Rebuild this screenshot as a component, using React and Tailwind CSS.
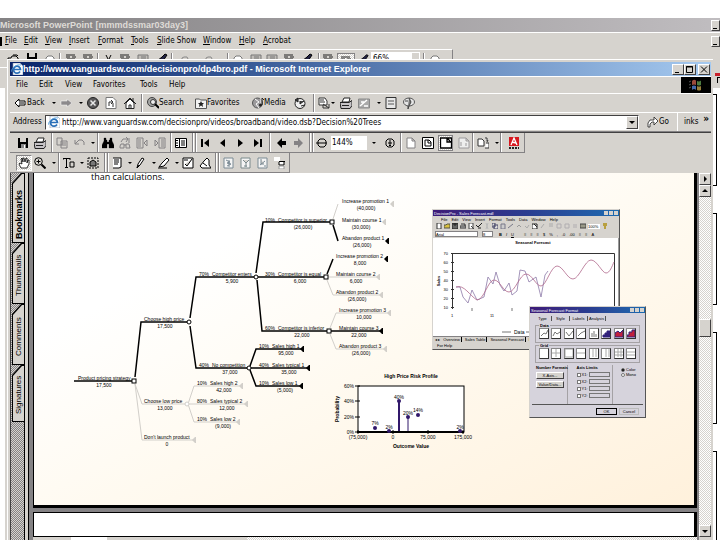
import React from "react";
import clsx from "clsx";

const DITHER =
  "bg-[conic-gradient(#848284_25%,#d6d3ce_0_50%,#848284_0_75%,#d6d3ce_0)] bg-[length:2px_2px]";
const TRACK =
  "bg-[conic-gradient(#ffffff_25%,#d6d3ce_0_50%,#ffffff_0_75%,#d6d3ce_0)] bg-[length:2px_2px]";
const RAISED =
  "bg-[#d6d3ce] border border-t-white border-l-white border-r-[#424142] border-b-[#424142]";

/* every glyph sits on a 12x12 grid */
const GLYPHS = {
  back: <path d="M0 6l4-4v2h6v4H4v2zM4 6h5" fill="#fff" stroke="#000" />,
  forward: <path d="M12 6L7 2v2H1v4h6v2z" fill="#8c8a8c" stroke="#fff" strokeWidth=".5" />,
  stop: (
    <>
      <circle cx="6" cy="6" r="5.5" fill="#5a595a" stroke="#222" />
      <path d="M3.5 3.5l5 5m0-5l-5 5" stroke="#e8e8e8" strokeWidth="1.5" />
    </>
  ),
  refresh: (
    <>
      <path d="M1 .5h7l3 3v8H1z" fill="#fff" stroke="#777" />
      <path d="M4 9V5h4M6 3l2 2-2 2M8 6v4" fill="none" stroke="#333" />
    </>
  ),
  home: (
    <>
      <path d="M2 6v5.5h8V6L6 2z" fill="#fff" stroke="#222" />
      <path d="M0 7l6-6 6 6M9 1v3M5 11V8h2v3" fill="none" stroke="#222" />
    </>
  ),
  search: (
    <>
      <circle cx="5" cy="5" r="4.5" fill="#a5a6a5" stroke="#424142" />
      <circle cx="6" cy="5" r="2.5" fill="#eee" stroke="#333" />
      <path d="M8 7l4 4" stroke="#000" strokeWidth="2" />
    </>
  ),
  favorites: (
    <>
      <path d="M.5 2h4l1 1h6v8.500H.5z" fill="#f2f2f2" stroke="#555" />
      <path d="M6 4l1 2h2L7.500 7.500 8 10 6 8.500 4 10l.5-2.500L3 6h2z" fill="#222" />
    </>
  ),
  media: (
    <>
      <circle cx="5.500" cy="6" r="5" fill="#9c9a9c" stroke="#555" />
      <path d="M3 2l4 3-3 2 3 4M9 1v6" fill="none" stroke="#fff" />
      <circle cx="8.500" cy="8" r="1.500" fill="#222" />
      <path d="M10 8V1l2 2" fill="none" stroke="#222" />
    </>
  ),
  history: (
    <>
      <circle cx="6" cy="6.500" r="5" fill="#efefef" stroke="#222" />
      <path d="M6 4v3l4-3M1 3l3-2v4zM7 9l4-1" fill="#444" stroke="#222" />
    </>
  ),
  mail: (
    <>
      <path d="M1 1h6l2 3v4H1z" fill="#fff" stroke="#333" />
      <path d="M2 3h4M2 5h5M5 7l6 4V7M5 8v3h6" fill="none" stroke="#333" />
    </>
  ),
  printer: (
    <>
      <path d="M4 1h6L9 5H2z" fill="#fff" stroke="#222" />
      <path d="M0 5.500h9l3-2v5l-2 3H1z" fill="#c6c3c6" stroke="#222" />
      <path d="M2 8.500h7" stroke="#222" />
    </>
  ),
  edit: (
    <>
      <path d="M.5 2h11v9H.5z" fill="#aaa" stroke="#888" />
      <path d="M2 9l7-6M3 5h3M6 9h4" stroke="#fff" strokeWidth="1.500" />
    </>
  ),
  discuss: (
    <>
      <path d="M1 .5h10v11H1z" fill="#e8e8e8" stroke="#333" />
      <path d="M3 4h6M3 7h6" stroke="#555" />
    </>
  ),
  messenger: (
    <>
      <ellipse cx="6" cy="5" rx="5.500" ry="4" fill="#e5e5e5" stroke="#555" />
      <path d="M6 1l2 4-2 4-1 3v-3M2 4h3" fill="#777" stroke="#444" />
    </>
  ),
  go: <path d="M1 11V7l2-3h4V1l4 4-4 4V6H5L3 8v3z" fill="#fff" stroke="#222" strokeWidth=".8" />,
  save: (
    <>
      <path d="M1 1h10v10H1z" fill="#000" />
      <path d="M3 1h6v4H3z" fill="#d6d3ce" />
      <path d="M4 7h5v4H4z" fill="#888" />
      <path d="M7 8h1v3H7z" fill="#fff" />
    </>
  ),
  copy: <path d="M1 1h5v7H1zM5 4h6v7H5zM6 6h4M6 8h4" fill="#d6d3ce" stroke="#848284" />,
  undo: <path d="M1 3v4h4M1 7l4-4h3l2 2v3" fill="none" stroke="#848284" />,
  find: (
    <path
      d="M2 1h2v2h1v2h2V3h1V1h2v3l2 4v3H7V7H5v4H0V8l2-4z"
      fill="#000"
      stroke="#000"
      strokeWidth=".3"
    />
  ),
  findNext: (
    <path d="M2 7h3v4H1V9zM7 7h3l1 4H7zM5 8h2M2 5l2-3h5M7 0l2 2-2 3M10 1v5" fill="none" stroke="#848284" />
  ),
  hitPrev: <path d="M1 1h6v10H1zM2 3h3M2 5h3M2 7h3M2 9h3M11 3L8 6l3 3z" fill="#d6d3ce" stroke="#848284" />,
  hitNext: <path d="M5 1h6v10H5zM7 3h3M7 5h3M7 7h3M7 9h3M1 3l3 3-3 3z" fill="#d6d3ce" stroke="#848284" />,
  panes: (
    <>
      <path d="M.5 1.500h11v9H.5zM4.500 1v10" fill="#fff" stroke="#000" />
      <path d="M1 3.500h2M1 6h2M1 8.500h2M6 4h4M6 6h4M6 8h4" stroke="#000" />
    </>
  ),
  first: <path d="M1 2h2v8H1zM9 2v8L4 6z" />,
  prev: <path d="M8 2v8L3 6z" />,
  next: <path d="M3 2v8l5-4z" />,
  last: <path d="M8 2h2v8H8zM2 2v8l5-4z" />,
  goBack: <path d="M1 6l5-5v3h4v4H6v3z" />,
  goForward: <path d="M10 6L5 1v3H1v4h4v3z" fill="#848284" />,
  minus: <path d="M2 4l2-2h4l2 2v4l-2 2H4L2 8zM0 6h11" fill="#d6d3ce" stroke="#000" />,
  plus: <path d="M2 4l2-2h4l2 2v4l-2 2H4L2 8zM4 6h4M6 3v6M5 8l1 1 1-1" fill="#d6d3ce" stroke="#000" />,
  page: <path d="M2 1h5l3 3v7H2zM7 1v3h3" fill="#fff" stroke="#848284" />,
  pageFit: <path d="M.5.5h11v11H.5zM3 3h4l2 2v4H3zM6 3v3h3" fill="#fff" stroke="#000" />,
  pageWidth: <path d="M.5 1h11v10H.5zM7 1v4h4M7 1l4 4" fill="#fff" stroke="#000" strokeWidth="1.300" />,
  pageFlow: <path d="M1 1h7l3 3v7H1zM8 1v3h3M3 5v4M8 6v3" fill="#eee" stroke="#9c9a9c" />,
  rotate: <path d="M1 2h4l2 2v5H1zM8 1h2v3M11 3l-1 2M9 6h3v5H8" fill="#fff" stroke="#333" />,
  adobe: (
    <>
      <path d="M1 0h10v9H1z" fill="#d6181f" />
      <path d="M3 8l3-7 3 7M4 5l4 1" stroke="#fff" strokeWidth="1.300" fill="none" />
      <path d="M1 11h10" stroke="#222" strokeDasharray="2 1" strokeWidth="2" />
    </>
  ),
  hand: (
    <path
      d="M3 11L1 7l1-1 2 1-1-5 1-1 1 4V1h1l1 4 1-4h1v5l1-3h1v4l-2 4z"
      fill="#fff"
      stroke="#000"
      strokeWidth=".8"
    />
  ),
  zoomIn: (
    <>
      <circle cx="4.500" cy="4.500" r="3.800" fill="#d6d3ce" stroke="#000" />
      <path d="M2.500 4.500h4M4.500 2.500v4" stroke="#000" />
      <path d="M7.500 7.500l4 4" stroke="#000" strokeWidth="2" />
    </>
  ),
  textSelect: <path d="M0 1.500h7M3.500 1v9M0 1v2M7 1v2M2 10.500h3M7 5h4v5H7z" fill="none" stroke="#000" />,
  graphics: (
    <>
      <path d="M1 1h10v10H1z" fill="none" stroke="#000" strokeDasharray="2 1" />
      <path d="M3 5l3-2 3 2v4H3z" fill="#777" stroke="#000" />
    </>
  ),
  note: (
    <>
      <path d="M2 1h8v8L8 11H2z" fill="#fff" />
      <path d="M2 1h8M3 3h5M3 5h5M3 7h4M10 1v9L8 11H2" fill="none" stroke="#000" />
    </>
  ),
  pencil: <path d="M2 11l1-4 4-6 2 1-4 6zM2 11l2-3" fill="#fff" stroke="#000" />,
  marker: <path d="M1 10l3-4 5-5 2 2-5 6zM0 11h9" fill="#fff" stroke="#000" />,
  spell: <path d="M1 1h10v10H1zM3 7l2 2 5-7M3 2v2M5 2v2" fill="#fff" stroke="#000" />,
  stamp: <path d="M1 9l4-5 3-3 2 2v5l2 3H3zM4 6l4 3" fill="#fff" stroke="#000" />,
  form1: <path d="M1 1h9v10H1zM3 3l4 2-3 1 4 1-4 2M6 3v7" fill="#f4f4f4" stroke="#7b8a94" />,
  form2: <path d="M1 1h9v10H1zM3 3l3 3 3-3M6 5v5M4 9h3" fill="#f4f4f4" stroke="#7b8a8c" />,
  form3: <path d="M1 1h9v10H1zM4 2v5h3M3 8l5-4M8 8v2" fill="#f4f4f4" stroke="#7b8a94" />,
  form4: (
    <>
      <path d="M0 0h6v4H0z" fill="#fff" />
      <path d="M5 4.500h6M5 5v3h5V4" fill="#fff" stroke="#000" />
      <path d="M5 9h5v3H5z" fill="#fff" stroke="#999" />
    </>
  ),
  folder: <path d="M1 6h3l1-2h4l2 2v6H1zM6 3h4l1 1" fill="none" stroke="#000" />,
  lens: <path d="M2 6l2-2h4l2 2v5H2z" fill="#fff" stroke="#777" />,
  lines: <path d="M1 3h9M1 5h4M7 5h4M2 7h8" stroke="#222" fill="none" />,
  cut: <path d="M3 3l3 6M8 3L5 9" stroke="#000" />,
  brush: <path d="M1 9l5-4 3-3 2 1-4 6" fill="#224" stroke="#000" />,
  grayBlock: <path d="M1 3h10v8H1zM4 5h5M4 7h5" fill="#c0bdb8" stroke="#777" />,
  grayArc: <path d="M3 8V6l2-1h3l1 2" fill="none" stroke="#888" />,
};

const Glyph = ({ name, className = "h-3 w-3" }) => (
  <svg viewBox="0 0 12 12" className={clsx("shrink-0", className)} fill="#000" aria-hidden="true">
    {GLYPHS[name]}
  </svg>
);

/* one toolbar cell: separator, drop arrow or icon button */
const Tool = ({ item }) => {
  const [name, width] = item;
  if (name === "|")
    return (
      <span className={clsx("h-full shrink-0", width)}>
        <span className="block h-full w-[2px] border-l border-r border-l-[#848284] border-r-white" />
      </span>
    );
  if (name === ".")
    return (
      <button aria-label="More" className={clsx("flex shrink-0 items-center", width)}>
        <span className="h-0 w-0 border-x-2 border-t-2 border-x-transparent border-t-black" />
      </button>
    );
  return (
    <button aria-label={name} className={clsx("flex shrink-0 items-center", width)}>
      <Glyph name={name} />
    </button>
  );
};

const Tools = ({ items }) => items.map((item, i) => <Tool key={i} item={item} />);

const PPT_TOOLS = [
  ["folder", "w-[19px]"], ["save", "w-[18px]"], ["lens", "w-[15px]"], ["|", "w-[6px]"],
  ["lines", "w-[17px]"], ["lines", "w-[15px]"], ["|", "w-[6px]"], ["cut", "w-[16px]"],
  ["lines", "w-[18px]"], ["grayBlock", "w-[19px]"], ["brush", "w-[15px]"], ["|", "w-[8px]"],
  ["grayArc", "w-[24px]"], ["grayArc", "w-[24px]"], ["|", "w-[5px]"], ["lens", "w-[18px]"],
  ["grayBlock", "w-[16px]"], ["grayBlock", "w-[17px]"], ["lines", "w-[18px]"], ["brush", "w-[17px]"],
  ["|", "w-[4px]"], ["lines", "w-[15px]"],
];

const ACRO_TOP_A = [
  ["save", "w-[17px]"], ["printer", "w-[17px]"], ["|", "w-[5px]"], ["copy", "w-[18px]"],
  ["undo", "w-[17px]"], [".", "w-[6px]"], ["|", "w-[5px]"], ["find", "w-[17px]"],
  ["findNext", "w-[17px]"], ["hitPrev", "w-[18px]"], ["hitNext", "w-[16px]"], ["|", "w-[5px]"],
  ["panes", "w-[17px]"], ["|", "w-[3px]"], ["|", "w-[5px]"], ["first", "w-[17px]"],
  ["prev", "w-[18px]"], ["next", "w-[17px]"], ["last", "w-[17px]"], ["|", "w-[7px]"],
  ["goBack", "w-[17px]"], ["goForward", "w-[16px]"], ["|", "w-[3px]"], ["|", "w-[4px]"],
  ["minus", "w-[15px]"],
];
const ACRO_TOP_B = [
  [".", "w-[12px]"], ["plus", "w-[16px]"], ["|", "w-[5px]"], ["page", "w-[17px]"],
  ["pageFit", "w-[16px]"],
];
const ACRO_TOP_C = [
  ["pageFlow", "w-[14px]"], ["|", "w-[5px]"], ["rotate", "w-[18px]"], [".", "w-[5px]"],
  ["|", "w-[8px]"], ["adobe", "w-[16px]"],
];
const ACRO_LOW = [
  ["zoomIn", "w-[18px]"], [".", "w-[6px]"], ["|", "w-[5px]"], ["textSelect", "w-[17px]"],
  [".", "w-[7px]"], ["graphics", "w-[17px]"], ["|", "w-[3px]"], ["|", "w-[4px]"],
  ["note", "w-[17px]"], [".", "w-[7px]"], ["pencil", "w-[17px]"], [".", "w-[6px]"],
  ["marker", "w-[17px]"], [".", "w-[7px]"], ["spell", "w-[17px]"], ["stamp", "w-[16px]"],
  ["|", "w-[3px]"], ["|", "w-[5px]"], ["form1", "w-[17px]"], ["form2", "w-[17px]"],
  ["form3", "w-[17px]"], ["form4", "w-[15px]"],
];

const Menu = ({ items, className, underline }) => (
  <nav className={clsx("flex items-center", className)}>
    {items.map(([label, width]) => (
      <button key={label} className={clsx("shrink-0 text-left whitespace-nowrap", width)}>
        {underline ? (
          <>
            <span className="underline">{label[0]}</span>
            {label.slice(1)}
          </>
        ) : (
          label
        )}
      </button>
    ))}
  </nav>
);

const PptHeader = () => (
  <header className="shrink-0 bg-[#d6d3ce]">
    <div className="flex h-[14px] items-center justify-between bg-linear-to-r from-[#848284] to-[#c0bdc0] font-['Liberation_Sans',Arial,sans-serif] text-[9px] font-bold text-[#dedbd6]">
      <span className="flex gap-[3px] whitespace-nowrap">
        <span>Microsoft PowerPoint</span>
        <span>[mmmdssmar03day3]</span>
      </span>
      <button aria-label="Minimize" className={clsx("flex h-[11px] w-[9px] items-end pb-px pl-px", RAISED)}>
        <span className="h-px w-[4px] bg-black" />
      </button>
    </div>
    <div className="flex h-[17px] items-center justify-between border-t border-white">
      <div className="flex items-center gap-[3px]">
        <span className="h-[9px] w-[2px] bg-black" />
        <Menu
          underline
          items={[
            ["File", "w-[19px]"], ["Edit", "w-[21px]"], ["View", "w-[24px]"], ["Insert", "w-[29px]"],
            ["Format", "w-[33px]"], ["Tools", "w-[26px]"], ["Slide Show", "w-[46px]"],
            ["Window", "w-[36px]"], ["Help", "w-[24px]"], ["Acrobat", "w-[30px]"],
          ]}
        />
      </div>
      <button aria-label="Minimize document" className={clsx("flex h-[11px] w-[9px] items-end pb-px pl-px", RAISED)}>
        <span className="h-px w-[4px] bg-black" />
      </button>
    </div>
    <div className="h-[10px] overflow-hidden">
      <div className="flex h-[13px] w-[453px] items-center border-t border-r border-t-white border-r-[#848284] pt-[3px] pl-[7px]">
        <Tools items={PPT_TOOLS} />
        <span className={clsx("flex h-full w-[18px] justify-center border border-[#848284]", TRACK)}>
          <Glyph name="lines" />
        </span>
        <span className="ml-[4px] w-[12px]"><Glyph name="brush" className="h-[10px] w-[10px]" /></span>
        <input aria-label="Slide zoom" defaultValue="66%" className="h-[12px] w-[40px] bg-white pt-[2px] pl-[2px]" />
        <span className="mr-[3px] h-[12px] w-[9px] border border-white" />
        <Tools items={[["|", "w-[6px]"], ["lens", "w-[12px]"]]} />
      </div>
    </div>
  </header>
);

const WinButton = ({ label, children }) => (
  <button aria-label={label} className={clsx("h-[11px] w-[12px]", RAISED)}>
    <svg viewBox="0 0 10 9" className="h-[9px] w-[10px]" fill="none" stroke="#000">
      {children}
    </svg>
  </button>
);

const IeMark = () => (
  <svg viewBox="0 0 12 12" className="h-3 w-3 shrink-0" aria-hidden="true">
    <path d="M2 0h7l3 3v9H2z" fill="#fff" stroke="#8a9bb5" strokeWidth=".6" />
    <path d="M9 8.500A3.500 3.500 0 1 1 9.500 6.500H3" fill="none" stroke="#2a6fb8" strokeWidth="1.700" />
    <path d="M0 9C1 4 6 1 10 2" fill="none" stroke="#4a9ad8" strokeWidth=".8" />
  </svg>
);

const TextTool = ({ glyph, label, width }) => (
  <button className={clsx("flex shrink-0 items-center whitespace-nowrap", width)}>
    <Glyph name={glyph} />
    {label}
  </button>
);

const Browser = () => (
  <>
    <div className="flex h-[14px] shrink-0 items-center justify-between bg-linear-to-r from-[#0a246a] to-[#a6caf0] pr-[1px] pl-[1px] text-white">
      <div className="flex items-center text-[9px] font-bold whitespace-nowrap">
        <IeMark />
        <h1 className="font-['Liberation_Sans',Arial,sans-serif]">
          http://www.vanguardsw.com/decisionpro/dp4bro.pdf - Microsoft Internet Explorer
        </h1>
      </div>
      <div className="flex">
        <WinButton label="Minimize"><path d="M2 7.500h4" /></WinButton>
        <WinButton label="Maximize"><path d="M1.500 1.500h6v6h-6zM1 2h7" /></WinButton>
        <span className="w-[2px]" />
        <WinButton label="Close"><path d="M2 1.500l6 6m0-6l-6 6" /></WinButton>
      </div>
    </div>

    <div className="flex h-[18px] shrink-0 justify-between border-t border-b border-white">
      <Menu
        className="pl-[6px]"
        items={[
          ["File", "w-[23px]"], ["Edit", "w-[26px]"], ["View", "w-[28px]"],
          ["Favorites", "w-[47px]"], ["Tools", "w-[29px]"], ["Help", "w-[20px]"],
        ]}
      />
      <div className="flex w-[30px] items-center justify-center bg-black">
        <svg viewBox="0 0 14 12" className="h-3 w-[14px]" aria-hidden="true">
          <path d="M0 3l2-1M0 6l2-1M0 9l2-1" stroke="#555" />
          <path d="M3 2q2-2 4-.5V6Q5 5 3 6z" fill="#9a4a3c" />
          <path d="M8 2q2 1 4-.5V6q-2 1-4 0z" fill="#4b7a40" />
          <path d="M3 7q2-1 4 0v4Q5 9 3 11z" fill="#4468a8" />
          <path d="M8 7q2 1 4 0v4q-2 1-4 0z" fill="#98803c" />
        </svg>
      </div>
    </div>

    <div className="flex h-[19px] shrink-0 items-center border-b border-white pl-[5px]">
      <TextTool glyph="back" label="Back" width="w-[37px]" />
      <Tools
        items={[
          [".", "w-[8px]"], ["forward", "w-[19px]"], [".", "w-[8px]"], ["stop", "w-[18px]"],
          ["refresh", "w-[19px]"], ["home", "w-[17px]"], ["|", "w-[6px]"],
        ]}
      />
      <TextTool glyph="search" label="Search" width="w-[48px]" />
      <TextTool glyph="favorites" label="Favorites" width="w-[57px]" />
      <TextTool glyph="media" label="Media" width="w-[42px]" />
      <Tools
        items={[
          ["history", "w-[19px]"], ["|", "w-[5px]"], ["mail", "w-[13px]"], [".", "w-[9px]"],
          ["printer", "w-[18px]"], ["edit", "w-[19px]"], [".", "w-[8px]"], ["discuss", "w-[18px]"],
          ["messenger", "w-[14px]"],
        ]}
      />
    </div>

    <div className="flex h-[19px] shrink-0 items-center border-b border-[#848284] pl-[3px]">
      <label htmlFor="address" className="w-[32px]">Address</label>
      <div className="flex h-[15px] min-w-0 flex-1 items-center border border-t-[#424142] border-r-white border-b-white border-l-[#424142] bg-white pl-[2px]">
        <IeMark />
        <input
          id="address"
          defaultValue="http://www.vanguardsw.com/decisionpro/videos/broadband/video.dsb?Decision%20Trees"
          className="h-full min-w-0 flex-1 pl-[2px] outline-none"
        />
        <button aria-label="Show addresses" className={clsx("flex h-[13px] w-[12px] items-center justify-center", RAISED)}>
          <span className="h-0 w-0 border-x-[3px] border-t-[3px] border-x-transparent border-t-black" />
        </button>
      </div>
      <button className="flex w-[38px] items-center pl-[8px]">
        <Glyph name="go" />
        Go
      </button>
      <div className="flex h-full w-[34px] items-center justify-between border-l border-white pr-[2px] pl-[6px]">
        <span>inks</span>
        <span className="-mt-[6px] text-[10px] font-bold">»</span>
      </div>
    </div>
  </>
);

const AcrobatBars = () => (
  <div className="shrink-0 border-t border-[#424142]">
    <div className="flex h-[20px]">
      <div className="flex h-[20px] items-center border-r border-b border-[#848284] pl-[7px]">
        <Tools items={ACRO_TOP_A} />
        <input aria-label="Zoom" defaultValue="144%" className="h-[14px] w-[36px] bg-white pl-[1px] outline-none" />
        <span className="w-[5px]" />
        <Tools items={ACRO_TOP_B} />
        <button aria-label="Fit width" className={clsx("mr-[5px] flex h-[16px] w-[15px] items-center justify-center border border-[#848284]", TRACK)}>
          <Glyph name="pageWidth" />
        </button>
        <Tools items={ACRO_TOP_C} />
      </div>
    </div>
    <div className="flex h-[20px]">
      <div className="flex h-[20px] items-center border-r border-b border-[#848284] pl-[6px]">
        <button aria-label="Hand tool" className={clsx("mr-[2px] flex h-[16px] w-[16px] items-center justify-center border border-t-[#848284] border-l-[#848284] border-r-white border-b-white", TRACK)}>
          <Glyph name="hand" />
        </button>
        <Tools items={ACRO_LOW} />
      </div>
    </div>
  </div>
);

const TAB_CUT =
  "[clip-path:polygon(0_0,100%_0,100%_calc(100%-10px),calc(100%-9px)_100%,0_100%)]";

const SIDE_TABS = [
  { label: "Bookmarks", style: "h-[70px] text-[9px] font-bold", inner: "pb-[12px]" },
  { label: "Thumbnails", style: "h-[61px]", inner: "pb-[4px]" },
  { label: "Comments", style: "h-[61px]", inner: "pb-[4px]" },
  { label: "Signatures", style: "h-[57px]", inner: "pb-[2px]" },
];

/* the tabs read bottom to top, so each one is drawn vertical and turned round */
const SideTabs = () => (
  <aside className={clsx("flex w-[15px] shrink-0 flex-col border-r border-l border-l-[#424142] border-r-black pl-px", DITHER)}>
    {SIDE_TABS.map((tab) => (
      <button key={tab.label} className={clsx("flex w-[12px] rotate-180 bg-black py-px pr-px", TAB_CUT, tab.style)}>
        <span
          className={clsx(
            "flex h-full w-full items-center justify-center bg-[#d6d3ce] [writing-mode:vertical-rl]",
            TAB_CUT,
            tab.inner
          )}
        >
          {tab.label}
        </span>
      </button>
    ))}
  </aside>
);

/* ---------- decision tree ---------- */

// edges: [points, light?]
const EDGES = [
  ["74,381 134,381"],
  ["135,377 141,322 189,322"],
  ["135,384 142,404 187,404", true],
  ["135,384 142,440 193,440", true],
  ["190,318 196,277 256,277"],
  ["190,326 196,368 249,368"],
  ["188,404 194,386 240,386", true],
  ["188,404 246,404", true],
  ["188,404 194,422 238,422", true],
  ["256,273 263,222 330,222"],
  ["258,277 325,277"],
  ["257,280 262,331 328,331"],
  ["333,219 338,204", true],
  ["333,225 338,241"],
  ["327,274 333,259"],
  ["328,277 378,277", true],
  ["327,280 333,295 381,295", true],
  ["330,328 336,313 388,313", true],
  ["331,331 381,331"],
  ["330,334 336,349 384,349", true],
  ["250,366 256,349 303,349"],
  ["250,368 308,368"],
  ["250,370 256,386 301,386"],
];

// labels: [x, y, text, value, value centre, probability, probability x]
const LABELS = [
  [78, 380, "Product pricing strategy", "17,500", 104],
  [144, 321, "Choose high price", "17,500", 165],
  [144, 403, "Choose low price", "13,000", 165],
  [144, 439, "Don't launch product", "0", 167],
  [212, 276, "Competitor enters", "5,900", 232, "70%", 199],
  [212, 367, "No competition", "37,000", 230, "40%", 199],
  [210, 385, "Sales high 2", "42,000", 224, "10%", 197],
  [210, 403, "Sales typical 2", "12,000", 227, "80%", 197],
  [210, 421, "Sales low 2", "(9,000)", 223, "10%", 197],
  [278, 222, "Competitor is superior", "(26,000)", 303, "10%", 265],
  [278, 276, "Competitor is equal", "6,000", 300, "30%", 265],
  [278, 330, "Competitor is inferior", "22,000", 302, "60%", 265],
  [272, 348, "Sales high 1", "95,000", 286, "10%", 259],
  [272, 367, "Sales typical 1", "35,000", 289, "40%", 259],
  [272, 385, "Sales low 1", "(5,000)", 285, "10%", 259],
  [342, 203, "Increase promotion 1", "(40,000)", 366],
  [342, 222, "Maintain course 1", "(30,000)", 361],
  [342, 240, "Abandon product 1", "(26,000)", 362],
  [336, 258, "Increase promotion 2", "8,000", 360],
  [336, 276, "Maintain course 2", "6,000", 356],
  [336, 294, "Abandon product 2", "(26,000)", 357],
  [339, 312, "Increase promotion 3", "10,000", 364],
  [339, 330, "Maintain course 3", "22,000", 359],
  [339, 348, "Abandon product 3", "(26,000)", 361],
];

const LEAVES = [
  [391, 204, true], [383, 222, true], [386, 241], [385, 259], [377, 277, true], [380, 295, true],
  [388, 313, true], [380, 331], [384, 349, true], [301, 349], [307, 368], [300, 386],
  [240, 386, true], [245, 404, true], [237, 422, true], [193, 440, true],
];

const POINTS = [
  [375, 428, "7%", 425], [389, 431, "2%", 429], [399, 401, "40%", 399], [408, 417, "20%", 415],
  [418, 415, "14%", 412], [460, 431, "2%", 429],
];

const DecisionTree = () => (
  <svg viewBox="34 173 660 332" className="block h-[332px] w-[660px] text-[5px]" fill="#000">
    <g fill="none">
      {EDGES.map(([points, light]) => (
        <polyline key={points} points={points} stroke={light ? "#d2cfca" : "#000"} strokeWidth={light ? 1 : 1.5} />
      ))}
    </g>
    {LEAVES.map(([x, y, light]) => (
      <path key={`${x}-${y}`} d={`M${x - 1} ${y}l3-3h1v6h-1z`} fill={light ? "#d2cfca" : "#000"} />
    ))}
    <g fill="#fff" stroke="#000">
      <rect x="132" y="379" width="4" height="4" />
      <circle cx="189" cy="322" r="2" />
      <circle cx="256" cy="277" r="2" />
      <circle cx="249" cy="368" r="2" />
      <circle cx="187" cy="404" r="2" stroke="#d2cfca" />
      <rect x="330" y="220" width="4" height="4" />
      <rect x="324" y="275" width="4" height="4" />
      <rect x="327" y="329" width="4" height="4" />
    </g>
    {LABELS.map(([x, y, label, value, cx, prob, px]) => (
      <g key={label}>
        {prob && <text x={px} y={y}>{prob}</text>}
        <text x={x} y={y}>{label}</text>
        <text x={cx} y={y + 7} textAnchor="middle">{value}</text>
      </g>
    ))}

    {/* risk profile chart */}
    <rect x="358" y="386" width="106" height="46" fill="#fff" stroke="#000" />
    <text x="411" y="378" textAnchor="middle" fontWeight="bold">High Price Risk Profile</text>
    <text x="411" y="448" textAnchor="middle" fontWeight="bold">Outcome Value</text>
    <text transform="translate(339 409) rotate(-90)" textAnchor="middle" fontWeight="bold">Probability</text>
    {[["60%", 386], ["40%", 401], ["20%", 417], ["0%", 432]].map(([t, y]) => (
      <g key={t}>
        <text x="354" y={y + 2} textAnchor="end">{t}</text>
        <path d={`M355 ${y}h5`} stroke="#000" />
      </g>
    ))}
    {[["(75,000)", 358], ["0", 393], ["75,000", 428], ["175,000", 463]].map(([t, x]) => (
      <g key={t}>
        <text x={x} y="439" textAnchor="middle">{t}</text>
        <path d={`M${x} 430v4`} stroke="#000" />
      </g>
    ))}
    <path d="M357 432h107" stroke="#000" strokeWidth="2" />
    <path d="M399 401v30" stroke="#31186b" strokeWidth="2" />
    <path d="M408 417v14" stroke="#31186b" />
    {POINTS.map(([x, y, t, ty]) => (
      <g key={x}>
        <circle cx={x} cy={y} r="2" fill="#31186b" />
        <text x={x} y={ty} textAnchor="middle">{t}</text>
      </g>
    ))}
  </svg>
);

/* ---------- application windows shown on the page ---------- */

const MiniTitle = ({ children, className }) => (
  <div className={clsx("flex shrink-0 items-center justify-between bg-linear-to-r from-[#3c1a78] via-[#2a3c90] to-[#1a6ab0] px-px text-white", className)}>
    <span>{children}</span>
    <span className="flex h-[4px] gap-px">
      <span className="w-[4px] bg-[#d6d3ce]" />
      <span className="w-[4px] bg-[#d6d3ce]" />
      <span className="w-[4px] bg-[#d6d3ce]" />
    </span>
  </div>
);

/* tiny toolbar marks on a 6x6 grid: [path, fill, stroke] */
const MINI_ICONS = [
  ["M1 0h4v6H1z", "#fff", "#333"],
  ["M0 2h2l1-1h3v4H0z", "#d8c040", "#554"],
  ["M0 0h6v6H0zM2 0h2v2H2z", "#666", "#222"],
  ["M0 3h6v2H0zM1 1h4v2", "#ccc", "#333"],
  ["M1 0h4v6H1zM3 3l3 3", "#fff", "#444"],
  ["M0 2l2 2 4-4M2 5h3", "none", "#222"],
  ["M2 0l2 6M4 0L2 6", "none", "#bbb"],
  ["M0 0h3v4H0zM2 2h4v4H2z", "#ddd", "#446"],
  ["M1 1h4v5H1z", "#ccc", "#778"],
  ["M0 5l5-4", "none", "#778"],
  ["M1 4l2-2 2 2", "none", "#999"],
  ["M1 3l2 2 2-3", "none", "#aaa"],
  ["M0 1h5v5H0zM2 1l3 3", "#fff", "#222"],
  ["M1 5l3-4", "none", "#aaa"],
  ["M1 1h4M1 3h4", "none", "#aaa"],
  ["M1 1h4v4H1z", "none", "#b0adb0"],
  ["M1 1h4v4H1z", "none", "#b0adb0"],
  ["M1 2h4M1 4h4", "none", "#b0adb0"],
  ["M0 1h6v4H0z", "#998", "#444"],
];

const ForecastWindow = () => (
  <section className="absolute top-[36px] left-[398px] flex h-[141px] w-[188px] flex-col border border-t-[#d6d3ce] border-r-[#555] border-b-[#555] border-l-[#d6d3ce] bg-[#d6d3ce] text-[4px] leading-[5px]">
    <MiniTitle className="h-[6px]">DecisionPro - Sales Forecast.mdl</MiniTitle>
    <div className="flex h-[6px] items-center gap-[4px] pl-[8px]">
      {["File", "Edit", "View", "Insert", "Format", "Tools", "Data", "Window", "Help"].map((m) => (
        <span key={m}>{m}</span>
      ))}
    </div>
    <div className="flex h-[8px] items-center gap-[2px] pl-[3px]">
      {MINI_ICONS.map(([d, fill, stroke], i) => (
        <svg key={i} viewBox="0 0 6 6" className="h-[6px] w-[6px] shrink-0">
          <path d={d} fill={fill} stroke={stroke} />
        </svg>
      ))}
      <span className="w-[12px] bg-white">100%</span>
      <svg viewBox="0 0 6 6" className="h-[6px] w-[6px] shrink-0">
        <path d="M1 0h4v3H4v3H2V3H1z" fill="#b8a040" />
      </svg>
    </div>
    <div className="flex h-[8px] items-center gap-[4px] pl-[2px]">
      <span className="h-[6px] w-[43px] border border-[#848284] bg-white">Arial</span>
      <span className="h-[6px] w-[11px] border border-[#848284] bg-white">8</span>
      <b className="pl-[2px]">B</b>
      <i>I</i>
      <u>U</u>
      <span className="flex gap-[4px] pl-[6px]">
        {["≡", "≡", "≡", "$", "%", ",", ".0", ".00", "≡", "≡", "A"].map((t, i) => (
          <span key={i}>{t}</span>
        ))}
      </span>
    </div>
    <div className="min-h-0 flex-1 bg-white">
      <svg viewBox="433 238 186 98" className="h-[98px] w-[186px]">
        <text x="533" y="244" textAnchor="middle" fontWeight="bold">Seasonal Forecast</text>
        <path d="M452.500 309V253.500H614.500V306M619 238v68" fill="none" stroke="#333" />
        {[70, 60, 50, 40, 30, 20, 10].map((n, i) => (
          <g key={n}>
            <path d={`M451 ${253.5 + i * 9}h3`} stroke="#333" />
            <text x="448" y={255 + i * 9} textAnchor="end">{n}</text>
          </g>
        ))}
        <text x="452" y="317" textAnchor="middle">1</text>
        <text x="492" y="317" textAnchor="middle">11</text>
        <path d="M472 308v3M512 308v3M502 332h9M526 332h8" stroke="#777" />
        <text x="514" y="334" fontSize="5">Data</text>
        <text transform="translate(440 281) rotate(-90)" textAnchor="middle" fontWeight="bold">Sales</text>
        <polyline
          points="456,287 460,287 463,297 468,303 472,290 477,300 484,297 488,277 493,284 496,272 500,285 504,291 509,283 512,295 517,291 520,270 525,271 529,282 536,277 541,297 545,275 548,271"
          fill="none"
          stroke="#8d7aa8"
          strokeWidth=".8"
        />
        <path
          d="M456 287C464 284 470 296 477 300C484 300 488 280 494 280S503 292 509 292S520 274 526 274S536 286 541 286S551 266 557 266S567 279 573 279S585 260 591 260S602 273 606 273S612 266 614 262"
          fill="none"
          stroke="#b0688c"
          strokeWidth=".8"
        />
      </svg>
    </div>
    <div className="flex h-[6px] shrink-0 gap-[2px] border-t border-[#848284] pl-[2px]">
      <span>◂ ▸</span>
      {["Overview", "Sales Table", "Seasonal Forecast", "Report"].map((t) => (
        <span key={t} className="border-r border-black px-px whitespace-nowrap">{t}</span>
      ))}
    </div>
    <div className="h-[7px] shrink-0 pt-px pl-[4px]">For Help</div>
  </section>
);

const DATA_ART = [
  "M1 7l3-3 2 1 2-4", "M1 7l2-4 2 2 3-2", "M1 3l3 4 4-5", "M1 7l3-3 4-2",
  "M2 8V4M4 8V2M6 8V5", "M1 8V6h2V4h2V2h3v6z", "M0 8V4l3-2 2 2 3-3v7z", "M0 8V6h2V3h3V1h3v7z",
];
const GRID_ART = [
  "", "M0 4h8M4 0v8", "M0 0h8v8H0z", "M0 4h8", "M3 0v8M6 0v8", "M4 0v8M7 0v8",
  "M3 0v8M6 0v8M0 3h8M0 6h8", "M0 3h8M0 6h8",
];

const ArtRow = ({ legend, art, filled }) => (
  <fieldset className="mx-[5px] h-[20px] border border-[#a5a2a5] px-[3px]">
    <legend className="px-px font-bold">{legend}</legend>
    <div className="flex justify-between">
      {art.map((d, i) => (
        <button key={i} aria-label={`${legend} ${i + 1}`} className="h-[11px] w-[10px] border border-t-[#888] border-r-[#333] border-b-[#333] border-l-[#888] bg-white">
          <svg viewBox="0 0 8 9" className="h-[9px] w-[8px]">
            <path
              d={d}
              fill={filled && i > 4 ? (i > 5 ? "#c0203c" : "#31207b") : "none"}
              stroke={filled ? (i > 4 ? "#31207b" : "#777") : "#aaa"}
            />
          </svg>
        </button>
      ))}
    </div>
  </fieldset>
);

const FormatDialog = () => (
  <section className="absolute top-[133px] left-[495px] flex h-[112px] w-[117px] flex-col border border-t-[#d6d3ce] border-r-[#555] border-b-[#555] border-l-[#d6d3ce] bg-[#d6d3dc] text-[4px] leading-[5px]">
    <MiniTitle className="h-[6px]">Seasonal Forecast Format</MiniTitle>
    <div className="flex h-[10px] items-center pl-[4px]">
      {["Type", "Style", "Labels", "Analysis"].map((t) => (
        <button key={t} className="w-[18px] border-r border-[#555]">{t}</button>
      ))}
    </div>
    <ArtRow legend="Data" art={DATA_ART} filled />
    <ArtRow legend="Grid" art={GRID_ART} />
    <div className="flex flex-1 justify-between px-[6px] pt-[2px]">
      <div className="flex w-[32px] flex-col gap-[2px] border-r border-[#a5a2a5] pr-[3px]">
        <b className="whitespace-nowrap">Number Formats</b>
        <button className={clsx("h-[7px]", RAISED)}>X-Axis...</button>
        <button className={clsx("h-[7px]", RAISED)}>Value/Data...</button>
      </div>
      <div className="flex w-[36px] flex-col gap-[2px] border-r border-[#a5a2a5]">
        <b>Axis Limits</b>
        {["X1:", "X2:", "Y1:", "Y2:"].map((t) => (
          <label key={t} className="flex items-center gap-px">
            <input type="checkbox" className="h-[4px] w-[4px] appearance-none border border-[#777] bg-white" />
            <span className="w-[6px]">{t}</span>
            <input aria-label={`${t} value`} className="h-[5px] w-[21px] border border-[#777]" />
          </label>
        ))}
      </div>
      <div className="flex w-[18px] flex-col pt-[2px]">
        {["Color", "Mono"].map((t, i) => (
          <label key={t} className="flex items-center gap-px">
            <input type="radio" name="tone" defaultChecked={i === 0} className="h-[4px] w-[4px] appearance-none rounded-full border border-[#777] bg-white checked:bg-black" />
            {t}
          </label>
        ))}
      </div>
    </div>
    <div className="mx-[2px] flex h-[13px] items-center justify-end gap-[2px] border-t border-[#555] pr-[4px]">
      <button className="h-[7px] w-[21px] border border-black">OK</button>
      <button className="h-[7px] w-[20px] border border-[#bbb]">Cancel</button>
    </div>
  </section>
);

const PageView = () => (
  <main className="flex min-w-0 flex-1 flex-col overflow-hidden border-l border-black bg-[#848284] pl-[4px]">
    <div className="relative h-[335px] shrink-0 border-r-[3px] border-b-[3px] border-l border-black bg-linear-to-br from-white from-25% via-[#fffaf0] via-55% to-[#fff1dc]">
      <p className="absolute top-0 left-[57px] font-['Open_Sans',sans-serif] text-[9px] leading-[8px]">
        than calculations.
      </p>
      <DecisionTree />
      <ForecastWindow />
      <FormatDialog />
    </div>
    <div className="mt-[4px] flex-1 border-t border-r-[3px] border-b border-l border-black bg-white" />
    <div className="flex h-[3px] shrink-0">
      <span className="w-[38px] bg-[#d6d3ce]" />
      <span className="w-[36px] bg-white" />
      <span className="w-[140px] bg-[#d6d3ce]" />
      <span className={clsx("flex-1", TRACK)} />
    </div>
  </main>
);

const ScrollButton = ({ label, d }) => (
  <button aria-label={label} className={clsx("h-[12px] w-[12px] shrink-0", RAISED)}>
    <svg viewBox="0 0 10 10" className="h-[10px] w-[10px]">
      <path d={d} />
    </svg>
  </button>
);

const Scrollbar = () => (
  <div className={clsx("flex w-[12px] shrink-0 flex-col", TRACK)}>
    <ScrollButton label="Panel menu" d="M4 2l3 3-3 3z" />
    <ScrollButton label="Scroll up" d="M2 6l3-3 3 3z" />
    <div className="flex-[122]" />
    <div className={clsx("h-[18px] shrink-0", RAISED)} />
    <div className="flex-[188]" />
    <ScrollButton label="Scroll down" d="M2 4h6L5 7z" />
    <div className="h-[3px] shrink-0 bg-[#d6d3ce]" />
  </div>
);

const SlideEdges = () => (
  <div className="flex w-[7px] shrink-0 flex-col overflow-hidden">
    <div className="h-[29px] shrink-0 bg-[#d6d3ce] pt-[14px] pl-[2px]">
      <span className="block h-[3px] bg-[#c8202c]" />
      <span className="mt-px ml-[2px] block h-[6px] border-t border-l border-black" />
    </div>
    <div className="flex flex-col gap-[27px] pt-[6px]">
      {[1, 2, 3, 4].map((n) => (
        <span key={n} className="h-[92px] w-[4px] shrink-0 border-y border-r border-black" />
      ))}
    </div>
  </div>
);

const App = () => {
  return (
    <div className="flex h-screen flex-col overflow-hidden bg-white pt-[18px] font-['DejaVu_Sans_Condensed','Liberation_Sans',sans-serif] text-[8px] leading-[10px] text-black">
      <PptHeader />
      <div className="flex min-h-0 flex-1">
        <div className="flex w-[7px] shrink-0 flex-col">
          <div className="h-[9px] border-b border-white bg-[#d6d3ce]" />
          <div className="h-[20px] bg-[#d6d3ce]" />
          <div className="flex-1 border-r-2 border-[#d6d3ce]" />
        </div>
        <div className="flex min-w-0 flex-1 flex-col border-t border-l border-white bg-[#d6d3ce] pt-[2px] pr-[2px] pl-[2px]">
          <Browser />
          <AcrobatBars />
          <div className="flex min-h-0 flex-1 font-['Liberation_Sans',Arial,sans-serif]">
            <SideTabs />
            <div className="w-[3px] shrink-0" />
            <PageView />
            <div className="w-[2px] shrink-0 bg-[#848284]" />
            <Scrollbar />
          </div>
        </div>
        <SlideEdges />
      </div>
    </div>
  );
};

export default App;
